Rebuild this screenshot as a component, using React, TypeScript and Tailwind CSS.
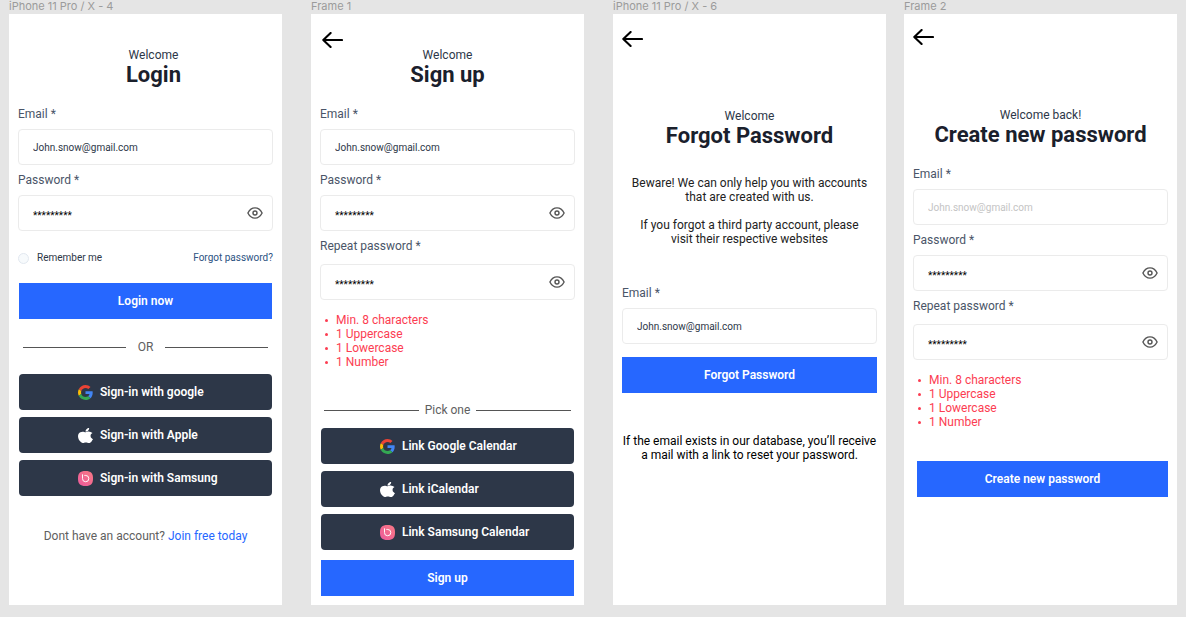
import { useId, type ReactNode } from "react";

function BackArrow() {
  return (
    <button type="button" aria-label="Back" className="block h-4 w-[21px]">
      <svg viewBox="0 0 21 16" className="h-4 w-[21px]" fill="none" stroke="#000" strokeWidth="2.1" strokeLinecap="round" strokeLinejoin="round">
        <path d="M8.6 1 1.3 8l7.3 7M1.5 8H20" />
      </svg>
    </button>
  );
}

function EyeIcon() {
  return (
    <svg viewBox="0 0 16 12" className="h-3 w-4" fill="none" stroke="#555" strokeWidth="1.4" strokeLinejoin="round">
      <path d="M.9 6C2.6 2.6 5 .9 8 .9S13.4 2.6 15.1 6C13.4 9.4 11 11.1 8 11.1S2.6 9.4.9 6Z" />
      <circle cx="8" cy="6" r="2" />
    </svg>
  );
}

function GoogleIcon() {
  return (
    <svg viewBox="0 0 48 48" className="size-[15px]">
      <path fill="#EA4335" d="M24 9.5c3.54 0 6.71 1.22 9.21 3.6l6.85-6.85C35.9 2.38 30.47 0 24 0 14.62 0 6.51 5.38 2.56 13.22l7.98 6.19C12.43 13.72 17.74 9.5 24 9.5z" />
      <path fill="#4285F4" d="M46.98 24.55c0-1.57-.15-3.09-.38-4.55H24v9.02h12.94c-.58 2.96-2.26 5.48-4.78 7.18l7.73 6c4.51-4.18 7.09-10.36 7.09-17.65z" />
      <path fill="#FBBC05" d="M10.53 28.59c-.48-1.45-.76-2.99-.76-4.59s.27-3.14.76-4.59l-7.98-6.19C.92 16.46 0 20.12 0 24c0 3.88.92 7.54 2.56 10.78l7.97-6.19z" />
      <path fill="#34A853" d="M24 48c6.48 0 11.93-2.13 15.89-5.81l-7.73-6c-2.15 1.45-4.92 2.3-8.16 2.3-6.26 0-11.57-4.22-13.47-9.91l-7.98 6.19C6.51 42.62 14.62 48 24 48z" />
    </svg>
  );
}

function AppleIcon() {
  return (
    <svg viewBox="2.2 0 19.6 24" preserveAspectRatio="none" className="size-[15px]" fill="#fff">
      <path d="M12.152 6.896c-.948 0-2.415-1.078-3.96-1.04-2.04.027-3.91 1.183-4.961 3.014-2.117 3.675-.546 9.103 1.519 12.09 1.013 1.454 2.208 3.09 3.792 3.039 1.52-.065 2.09-.987 3.935-.987 1.831 0 2.35.987 3.96.948 1.637-.026 2.676-1.48 3.676-2.948 1.156-1.688 1.636-3.325 1.662-3.415-.039-.013-3.182-1.221-3.22-4.857-.026-3.04 2.48-4.494 2.597-4.559-1.429-2.09-3.623-2.324-4.39-2.376-2-.156-3.675 1.09-4.61 1.09zM15.53 3.83c.843-1.012 1.4-2.427 1.245-3.83-1.207.052-2.662.805-3.532 1.818-.78.896-1.454 2.338-1.273 3.714 1.338.104 2.715-.688 3.559-1.701" />
    </svg>
  );
}

function SamsungIcon() {
  const fill = useId();
  return (
    <svg viewBox="0 0 30 30" className="size-[15px]" fill="none">
      <defs>
        <linearGradient id={fill} x1="0" y1="1" x2="1" y2="0">
          <stop offset="0" stopColor="#ec5a9c" />
          <stop offset="1" stopColor="#f87984" />
        </linearGradient>
      </defs>
      <path fill={`url(#${fill})`} d="M15 0C26 0 30 4 30 15S26 30 15 30 0 26 0 15 4 0 15 0Z" />
      <path stroke="#fff" strokeWidth="1.9" strokeLinecap="round" d="M9 7.5V15a6.3 6.3 0 1 0 6.6-6.1H13.5" />
    </svg>
  );
}

function Frame({ name, children }: { name: string; children: ReactNode }) {
  return (
    <section className="flex min-w-0 flex-1 flex-col">
      <h2 className="h-3.5 font-[Inter,sans-serif] text-[11px] leading-3 whitespace-nowrap text-[#9b9b9b]">{name}</h2>
      <div className="flex-1 bg-white">{children}</div>
    </section>
  );
}

function Title({ small, children }: { small: string; children: ReactNode }) {
  return (
    <header className="text-center">
      <p className="text-xs leading-3.5 text-[#2d3748]">{small}</p>
      <h1 className="text-[22px] leading-[26px] font-bold text-[#1a202c]">{children}</h1>
    </header>
  );
}

const inputBox = "h-9 w-full rounded-[4px] border border-[#ebebeb] bg-white px-3.5 outline-none";

function EmailField({ placeholder = false }: { placeholder?: boolean }) {
  const id = useId();
  return (
    <div className="flex flex-col gap-[7px]">
      <label htmlFor={id} className="text-xs leading-4 text-[#4a5568]">Email *</label>
      <input
        id={id}
        type="email"
        defaultValue={placeholder ? undefined : "John.snow@gmail.com"}
        placeholder="John.snow@gmail.com"
        className={`${inputBox} text-[10px] text-[#2d3748] placeholder:text-[#c4c4c4]`}
      />
    </div>
  );
}

function PasswordField({ label, repeat = false }: { label: string; repeat?: boolean }) {
  const id = useId();
  return (
    <div className={repeat ? "flex flex-col gap-2.5" : "flex flex-col gap-[7px]"}>
      <label htmlFor={id} className="text-xs leading-4 text-[#4a5568]">{label} *</label>
      <div className="relative">
        <input id={id} type="text" autoComplete="off" defaultValue="*********" className={`${inputBox} pt-1 text-[10px] text-black`} />
        <button type="button" aria-label="Show password" className="absolute inset-y-0 right-2.5 flex items-center">
          <EyeIcon />
        </button>
      </div>
    </div>
  );
}

function PrimaryButton({ children }: { children: ReactNode }) {
  return (
    <button type="submit" className="h-9 w-full bg-[#2667ff] text-xs font-semibold text-white">
      {children}
    </button>
  );
}

function ProviderButton({ icon, children }: { icon: ReactNode; children: ReactNode }) {
  return (
    <button type="button" className="flex h-9 w-full items-center gap-[7px] rounded-[4px] bg-[#2d3748] pl-[59px] text-xs font-semibold text-white">
      {icon}
      {children}
    </button>
  );
}

function Divider({ children, gap }: { children: ReactNode; gap: string }) {
  return (
    <div className={`flex items-center text-xs leading-4 text-[#606060] ${gap}`}>
      <span className="h-px flex-1 bg-[#555]" />
      {children}
      <span className="h-px flex-1 bg-[#555]" />
    </div>
  );
}

function PasswordRules() {
  return (
    <ul className="text-xs leading-3.5 text-[#fc3d52]">
      {["Min. 8 characters", "1 Uppercase", "1 Lowercase", "1 Number"].map((rule) => (
        <li key={rule} className="flex items-center gap-2">
          <span className="size-[3px] rounded-full bg-[#fc3d52]" />
          {rule}
        </li>
      ))}
    </ul>
  );
}

function LoginFrame() {
  return (
    <Frame name="iPhone 11 Pro / X - 4">
      <form className="px-[9px] pt-[34px]">
        <div className="pl-4">
          <Title small="Welcome">Login</Title>
        </div>
        <div className="mt-[18px] flex flex-col gap-[7px]">
          <EmailField />
          <PasswordField label="Password" />
        </div>
        <div className="mt-[19px] flex items-center justify-between text-[10px] leading-4">
          <label className="flex items-center gap-2 text-[#2d3748]">
            <input type="checkbox" className="size-[11px] appearance-none rounded-full border border-[#e2e8f0] bg-[#f7fafc] checked:bg-[#2667ff]" />
            Remember me
          </label>
          <a href="#forgot" className="text-[#2c5282]">Forgot password?</a>
        </div>
        <div className="mt-[17px] px-px">
          <PrimaryButton>Login now</PrimaryButton>
          <div className="mt-5 px-1">
            <Divider gap="gap-3">OR</Divider>
          </div>
          <div className="mt-[19px] flex flex-col gap-[7px]">
            <ProviderButton icon={<GoogleIcon />}>Sign-in with google</ProviderButton>
            <ProviderButton icon={<AppleIcon />}>Sign-in with Apple</ProviderButton>
            <ProviderButton icon={<SamsungIcon />}>Sign-in with Samsung</ProviderButton>
          </div>
        </div>
        <p className="mt-8 text-center text-xs leading-4 text-[#606060]">
          Dont have an account? <a href="#signup" className="text-[#2667ff]">Join free today</a>
        </p>
      </form>
    </Frame>
  );
}

function SignUpFrame() {
  return (
    <Frame name="Frame 1">
      <form className="px-[9px] pt-[18px]">
        <div className="pl-0.5">
          <BackArrow />
        </div>
        <Title small="Welcome">Sign up</Title>
        <div className="mt-[18px] flex flex-col gap-[7px]">
          <EmailField />
          <PasswordField label="Password" />
          <PasswordField label="Repeat password" repeat />
        </div>
        <div className="mt-[13px] pl-[5px]">
          <PasswordRules />
        </div>
        <div className="mt-[33px] px-1">
          <Divider gap="gap-1.5">Pick one</Divider>
        </div>
        <div className="mt-2.5 flex flex-col gap-[7px] px-px">
          <ProviderButton icon={<GoogleIcon />}>Link Google Calendar</ProviderButton>
          <ProviderButton icon={<AppleIcon />}>Link iCalendar</ProviderButton>
          <ProviderButton icon={<SamsungIcon />}>Link Samsung Calendar</ProviderButton>
        </div>
        <div className="mt-2.5 px-px">
          <PrimaryButton>Sign up</PrimaryButton>
        </div>
      </form>
    </Frame>
  );
}

function ForgotFrame() {
  return (
    <Frame name="iPhone 11 Pro / X - 6">
      <form className="px-[9px] pt-[17px]">
        <BackArrow />
        <div className="mt-[62px]">
          <Title small="Welcome">Forgot Password</Title>
        </div>
        <div className="mt-[27px] flex flex-col gap-3.5 text-center text-xs leading-3.5 text-[#222]">
          <p>
            Beware! We can only help you with accounts
            <br />
            that are created with us.
          </p>
          <p>
            If you forgot a third party account, please
            <br />
            visit their respective websites
          </p>
        </div>
        <div className="mt-[39px]">
          <EmailField />
        </div>
        <div className="mt-[13px]">
          <PrimaryButton>Forgot Password</PrimaryButton>
        </div>
        <p className="mt-[41px] text-center text-xs leading-3.5 text-black">
          If the email exists in our database, you’ll receive
          <br />a mail with a link to reset your password.
        </p>
      </form>
    </Frame>
  );
}

function CreateFrame() {
  return (
    <Frame name="Frame 2">
      <form className="px-[9px] pt-[15px]">
        <BackArrow />
        <div className="mt-[63px]">
          <Title small="Welcome back!">Create new password</Title>
        </div>
        <div className="mt-[18px] flex flex-col gap-[7px]">
          <EmailField placeholder />
          <PasswordField label="Password" />
          <PasswordField label="Repeat password" repeat />
        </div>
        <div className="mt-[13px] pl-[5px]">
          <PasswordRules />
        </div>
        <div className="mt-8 pl-1">
          <PrimaryButton>Create new password</PrimaryButton>
        </div>
      </form>
    </Frame>
  );
}

export default function App() {
  return (
    <main className="flex min-h-screen gap-[18px] bg-[#e5e5e5] px-[9px] pb-3 font-[Roboto,sans-serif]">
      <div className="flex min-w-0 flex-[877] gap-[29px]">
        <LoginFrame />
        <SignUpFrame />
        <ForgotFrame />
      </div>
      <div className="flex min-w-0 flex-[273]">
        <CreateFrame />
      </div>
    </main>
  );
}
